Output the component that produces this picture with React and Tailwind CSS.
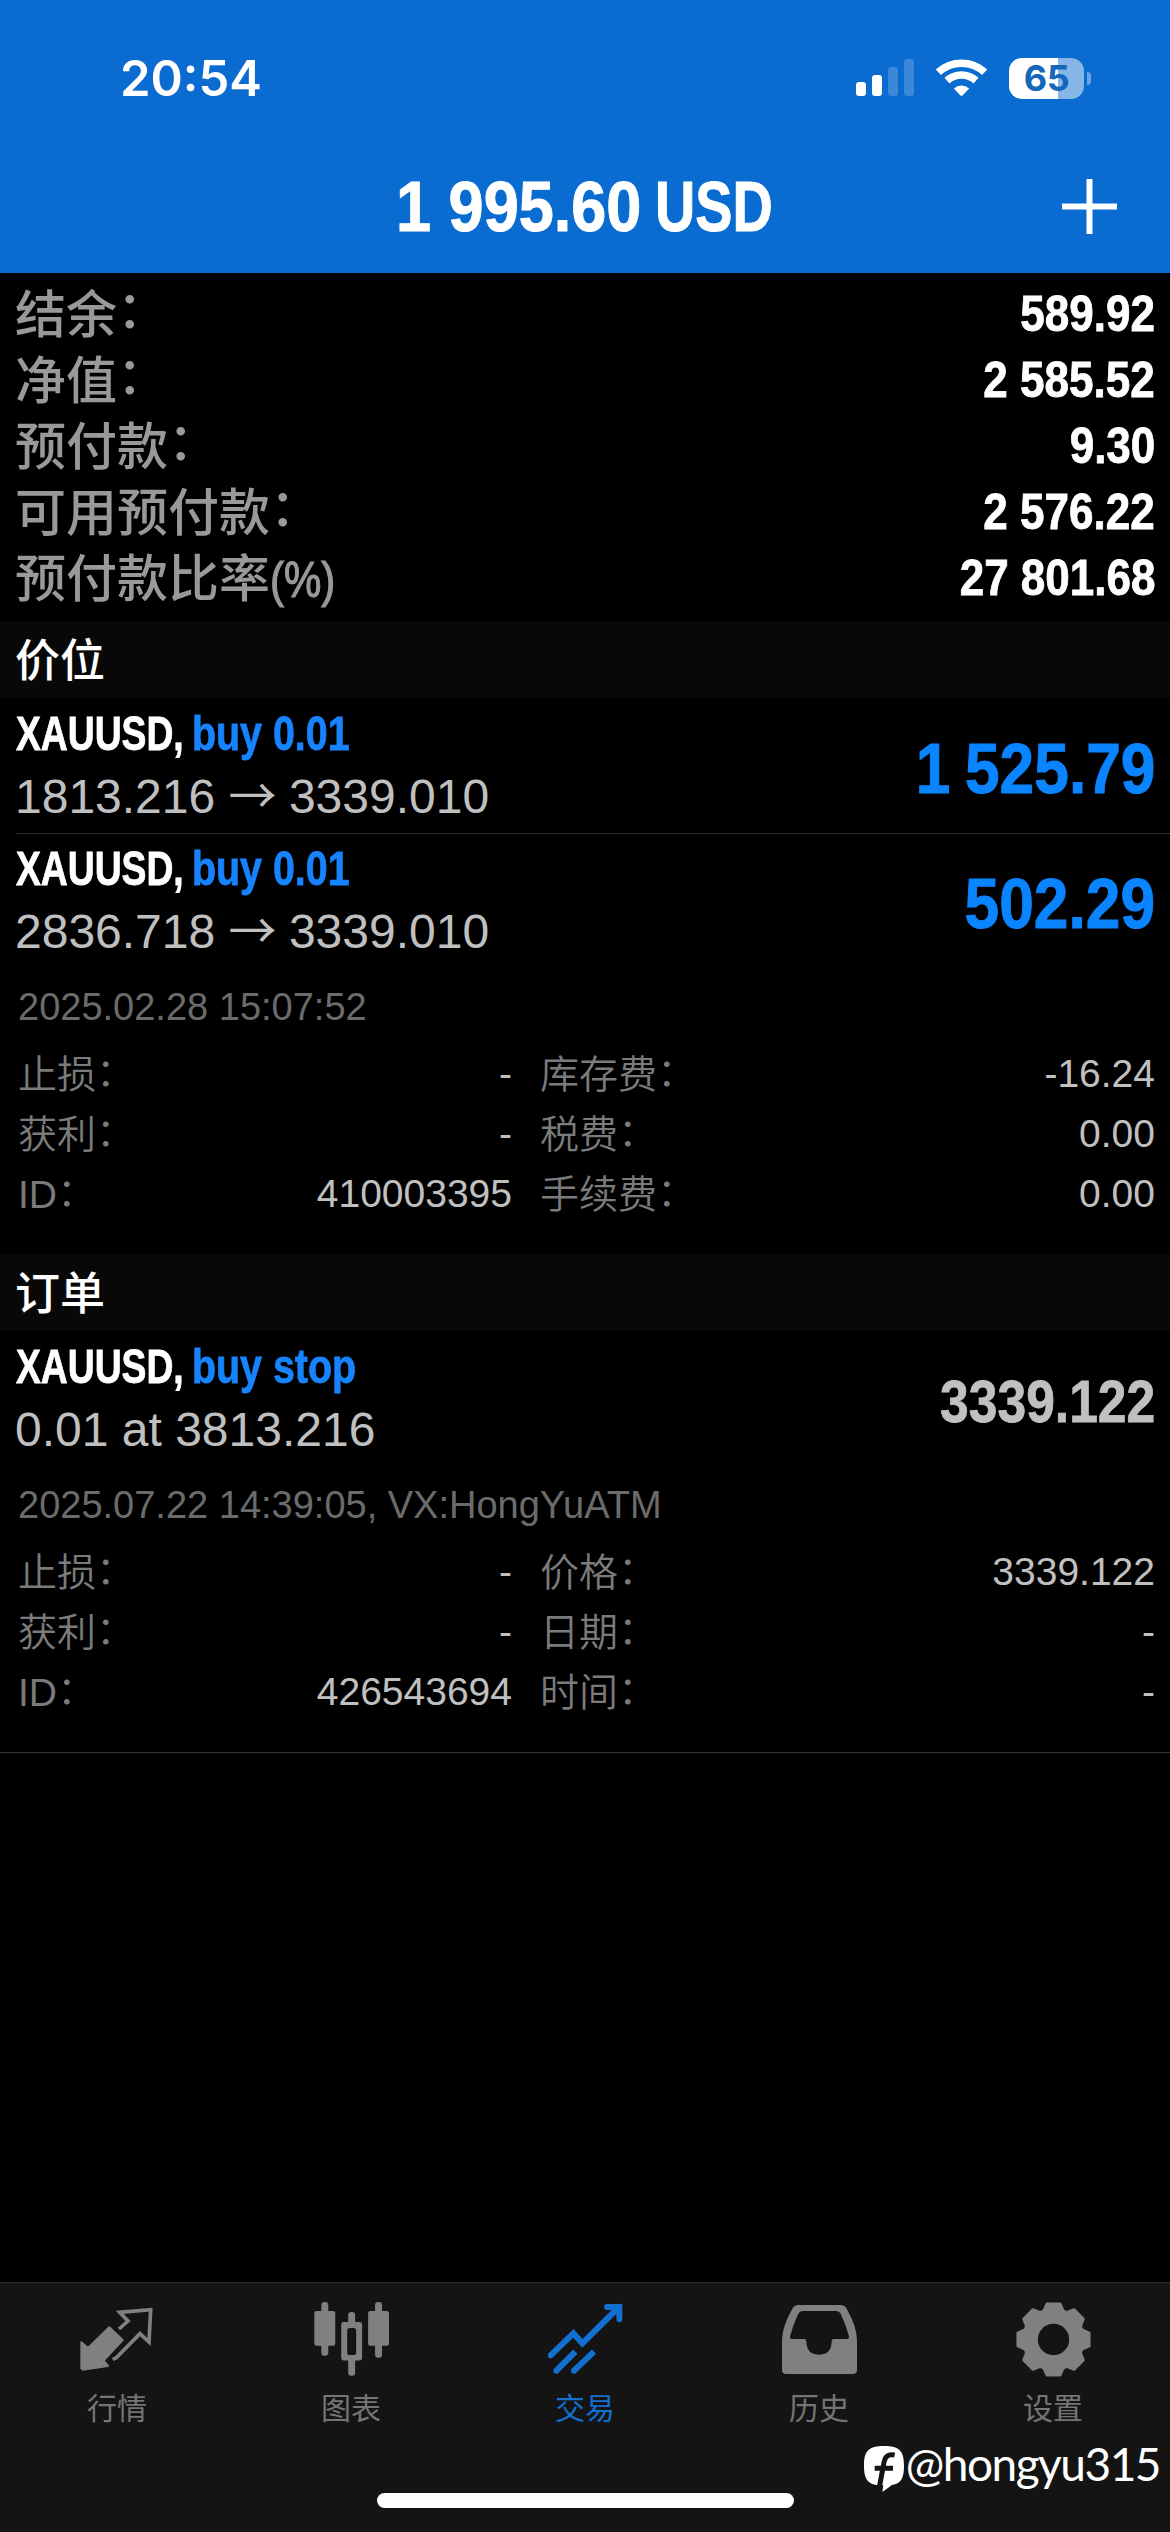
const SANS = "font-['Liberation_Sans','Noto_Sans_CJK_SC',sans-serif]";

const summary = [
  { label: "结余", value: "589.92" },
  { label: "净值", value: "2 585.52" },
  { label: "预付款", value: "9.30" },
  { label: "可用预付款", value: "2 576.22" },
  { label: "预付款比率", suffix: "(%)", value: "27 801.68" },
];

function SignalIcon() {
  return (
    <svg width="58" height="38" viewBox="0 0 58 38" fill="#fff">
      <rect x="0" y="23" width="10" height="14" rx="3" />
      <rect x="16" y="16" width="10" height="21" rx="3" />
      <rect x="32" y="8" width="10" height="29" rx="3" opacity="0.2" />
      <rect x="48" y="0" width="10" height="37" rx="3" opacity="0.2" />
    </svg>
  );
}

function WifiIcon() {
  return (
    <svg width="51" height="38" viewBox="0 0 51 38" fill="none" stroke="#fff" strokeWidth="7.6">
      <path d="M2.4 13.3A34 34 0 0 1 48.6 13.3" />
      <path d="M11 21.6A21.6 21.6 0 0 1 40 21.6" />
      <path d="M17.8 29.5A11.5 11.5 0 0 1 33.2 29.5L26.5 36.6Q25.5 37.5 24.5 36.6Z" fill="#fff" stroke="none" />
    </svg>
  );
}

function Battery() {
  return (
    <div className="flex items-center gap-[3px]">
      <div className="flex h-[41px] w-[75px] items-center justify-center rounded-[13px] bg-[linear-gradient(90deg,#fff_49px,#86b5e8_49px)]">
        <span className="font-['Inter',sans-serif] text-[36px] leading-[41px] font-bold tracking-[-0.5px] text-[#1467b9]">65</span>
      </div>
      <div className="h-[13px] w-[4px] rounded-r-full bg-[#6ba5e3]" />
    </div>
  );
}

function QuotesIcon() {
  return (
    <svg width="75" height="75" viewBox="0 0 225 225">
      <path
        d="M4 121L24 138L88 76L128 114L71 176L84 192L8 203L4 199Z"
        fill="currentColor" stroke="currentColor" strokeWidth="6" strokeLinejoin="round"
      />
      <path d="M117 81L144 57L119 31L212 23L207 120L180 95L108 168L98 172" fill="none" stroke="currentColor" strokeWidth="11" />
    </svg>
  );
}

function ChartIcon() {
  return (
    <svg width="75" height="75" viewBox="0 0 226 226" fill="currentColor">
      <rect x="1" y="27" width="63" height="105" rx="7" />
      <rect x="22" y="0" width="21" height="162" rx="9" />
      <rect x="163" y="27" width="63" height="105" rx="7" />
      <rect x="184" y="0" width="21" height="168" rx="9" />
      <rect x="103" y="30" width="21" height="48" rx="9" />
      <rect x="103" y="165" width="21" height="57" rx="9" />
      <path
        fillRule="evenodd"
        d="M89 60H138Q145 60 145 67V169Q145 176 138 176H89Q82 176 82 169V67Q82 60 89 60ZM108 78Q100 78 100 86V152Q100 160 108 160H119Q127 160 127 152V86Q127 78 119 78Z"
      />
    </svg>
  );
}

function TradeIcon() {
  return (
    <svg width="75" height="75" viewBox="0 0 225 225" fill="none" stroke="currentColor" strokeWidth="18">
      <path d="M8 160L76 94L103 124L213 15" strokeLinecap="round" />
      <path d="M177 15H214V52" strokeLinecap="round" />
      <path d="M82 149L25 206M138 149L78 206" />
      <circle cx="25" cy="206" r="9" fill="currentColor" stroke="none" />
      <circle cx="78" cy="206" r="9" fill="currentColor" stroke="none" />
    </svg>
  );
}

function HistoryIcon() {
  return (
    <svg width="75" height="75" viewBox="0 0 225 225" fill="currentColor">
      <path
        fillRule="evenodd"
        d="M50 9H175Q188 9 194 20Q225 75 225 115V203Q225 216 212 216H13Q0 216 0 203V115Q0 75 31 20Q37 9 50 9ZM62 27Q53 27 49 35Q34 66 24 103Q23 111 30 111H67Q73 111 73 118Q73 158 111 158Q149 158 149 118Q149 111 156 111H195Q202 111 201 103Q191 66 176 35Q172 27 163 27Z"
      />
    </svg>
  );
}

const gearPoints = Array.from({ length: 8 }, (_, i) => i * 45)
  .flatMap((a) => [[a - 21.5, 90], [a - 18, 92], [a - 10.5, 109], [a + 10.5, 109], [a + 18, 92], [a + 21.5, 90]])
  .map(([deg, r]) => {
    const t = (deg * Math.PI) / 180;
    return `${(112.5 + r * Math.sin(t)).toFixed(1)},${(112.5 - r * Math.cos(t)).toFixed(1)}`;
  })
  .join(" ");

function GearIcon() {
  return (
    <svg width="75" height="75" viewBox="0 0 225 225">
      <mask id="gear-hole">
        <rect width="225" height="225" fill="#fff" />
        <circle cx="112.5" cy="112.5" r="47" fill="#000" />
      </mask>
      <polygon
        points={gearPoints} mask="url(#gear-hole)"
        fill="currentColor" stroke="currentColor" strokeWidth="8" strokeLinejoin="round"
      />
    </svg>
  );
}

function WatermarkLogo() {
  return (
    <svg width="40" height="46" viewBox="0 0 120 138">
      <path d="M60 0C106 0 120 14 120 59C120 98 110 112 84 117L55 138L58 118C14 118 0 104 0 59C0 14 14 0 60 0Z" fill="#fff" />
      <path d="M92 27C68 22 61 36 58 60L46 124M32 67H87" fill="none" stroke="#141414" strokeWidth="15" />
    </svg>
  );
}

function SectionHeader({ children }) {
  return (
    <div className="flex h-[77px] items-center bg-[#080808] pt-[5px] pl-[15px] text-[45px] leading-[60px] font-medium text-white">
      {children}
    </div>
  );
}

function Item({ action, sub, price, divider }) {
  return (
    <div className={`ml-4 flex h-[135px] justify-between border-t pr-[15px] ${divider ? "border-[#2f2f2f]" : "border-transparent"}`}>
      <div className="pt-[5px]">
        <div className="flex h-[60px] text-[48px] leading-[60px] font-bold whitespace-pre [-webkit-text-stroke:0.8px]">
          <div className="w-[176px]">
            <span className="inline-block origin-left scale-x-[0.776] text-white">XAUUSD,</span>
          </div>
          <span className="inline-block origin-left scale-x-[0.82] text-[#1783ff]">{action}</span>
        </div>
        <div className="-ml-px text-[48px] leading-[65px] whitespace-pre text-[#c0c0c0]">{sub}</div>
      </div>
      {price}
    </div>
  );
}

function Profit({ children }) {
  return (
    <span className="h-[134px] origin-right scale-x-[0.89] pt-[3px] text-[70px] leading-[135px] font-bold [word-spacing:-3px] text-[#0a84ff] [-webkit-text-stroke:1px]">
      {children}
    </span>
  );
}

function Arrow() {
  return <span className="font-['Noto_Sans_CJK_SC',sans-serif] leading-none tracking-[-1px]">→</span>;
}

function DetailCell({ label, value, className }) {
  return (
    <div className={`flex justify-between ${className}`}>
      <span className="translate-y-px font-[350] text-[#7b7b7b]">
        {label}
        <span className="relative -top-[2px]">：</span>
      </span>
      <span className="text-[#c0c0c0]">{value}</span>
    </div>
  );
}

function Details({ stamp, rows }) {
  return (
    <div className="h-[286px] pt-[9px] pr-[15px] pl-[18px] text-[39px] leading-[60px]">
      <div className="mb-[7px] text-[38px] text-[#6b6b6b]">{stamp}</div>
      {rows.map(([l1, v1, l2, v2]) => (
        <div key={l1} className="flex">
          <DetailCell className="w-[494px]" label={l1} value={v1} />
          <DetailCell className="ml-7 flex-1" label={l2} value={v2} />
        </div>
      ))}
    </div>
  );
}

function Tab({ icon, label, active }) {
  return (
    <div className={`flex flex-1 flex-col items-center pt-[19px] ${active ? "text-[#136fd0]" : "text-[#808080]"}`}>
      {icon}
      <span className={`mt-[12px] text-[30px] leading-10 ${active ? "" : "text-[#757575]"}`}>{label}</span>
    </div>
  );
}

export default function App() {
  return (
    <div className={`relative flex h-[2532px] w-[1170px] flex-col overflow-hidden bg-black ${SANS}`}>
      <header className="h-[273px] bg-[#0a6bd0] text-white">
        <div className="flex h-[156px] items-center justify-between pr-[79px] pl-[120px]">
          <span className="font-['Inter',sans-serif] text-[49px] leading-none font-semibold">20:54</span>
          <div className="flex items-center">
            <SignalIcon />
            <div className="ml-[22px]"><WifiIcon /></div>
            <div className="ml-[22px]"><Battery /></div>
          </div>
        </div>
        <div className="flex h-[100px] items-center pr-[53px] pl-[396px] text-[71px] leading-[100px] font-bold whitespace-pre">
          <div className="w-[259px] translate-y-px [-webkit-text-stroke:1px]">
            <span className="inline-block origin-left scale-x-[0.888]">1 995.60</span>
          </div>
          <span className="inline-block origin-left translate-y-px scale-x-[0.785] [-webkit-text-stroke:1px]">USD</span>
          <svg className="ml-auto" width="55" height="55" viewBox="0 0 55 55" stroke="#fff" strokeWidth="6">
            <path d="M27.5 0V55M0 27.5H55" />
          </svg>
        </div>
      </header>

      <section className="h-[348px] pt-2 pr-[15px] pl-[15px]">
        {summary.map((row) => (
          <div key={row.label} className="flex justify-between leading-[66px]">
            <span className="flex translate-y-[2px] text-[51px] font-medium text-[#999]">
              {row.label}
              {row.suffix ? (
                <span className="inline-block origin-left scale-x-[0.84] text-[50px] [-webkit-text-stroke:1.2px]">{row.suffix}</span>
              ) : (
                <span className="relative -top-[5px]">：</span>
              )}
            </span>
            <span className="origin-right scale-x-[0.88] text-[50px] font-bold text-white [-webkit-text-stroke:0.8px]">{row.value}</span>
          </div>
        ))}
      </section>

      <SectionHeader>价位</SectionHeader>
      <Item action="buy 0.01" sub={<>1813.216 <Arrow /> 3339.010</>} price={<Profit>1 525.79</Profit>} />
      <Item divider action="buy 0.01" sub={<>2836.718 <Arrow /> 3339.010</>} price={<Profit>502.29</Profit>} />
      <Details
        stamp="2025.02.28 15:07:52"
        rows={[
          ["止损", "-", "库存费", "-16.24"],
          ["获利", "-", "税费", "0.00"],
          ["ID", "410003395", "手续费", "0.00"],
        ]}
      />

      <SectionHeader>订单</SectionHeader>
      <Item
        action="buy stop"
        sub="0.01 at 3813.216"
        price={
          <span className="h-[134px] origin-right scale-x-[0.86] text-[60px] leading-[139px] font-bold text-[#c0c0c0] [-webkit-text-stroke:0.8px]">
            3339.122
          </span>
        }
      />
      <Details
        stamp="2025.07.22 14:39:05, VX:HongYuATM"
        rows={[
          ["止损", "-", "价格", "3339.122"],
          ["获利", "-", "日期", "-"],
          ["ID", "426543694", "时间", "-"],
        ]}
      />
      <div className="h-px bg-[#333]" />

      <nav className="mt-auto h-[250px] border-t border-[#2c2c2c] bg-[#141414]">
        <div className="flex h-[210px]">
          <Tab icon={<QuotesIcon />} label="行情" />
          <Tab icon={<ChartIcon />} label="图表" />
          <Tab active icon={<TradeIcon />} label="交易" />
          <Tab icon={<HistoryIcon />} label="历史" />
          <Tab icon={<GearIcon />} label="设置" />
        </div>
        <div className="mx-auto h-[15px] w-[417px] rounded-full bg-white" />
      </nav>

      <div className="absolute right-[10px] bottom-[40px] flex items-end gap-[2px] text-white">
        <WatermarkLogo />
        <span className="font-['Lato',sans-serif] text-[46px] leading-[56px] tracking-[-1.5px]">@hongyu315</span>
      </div>
    </div>
  );
}
